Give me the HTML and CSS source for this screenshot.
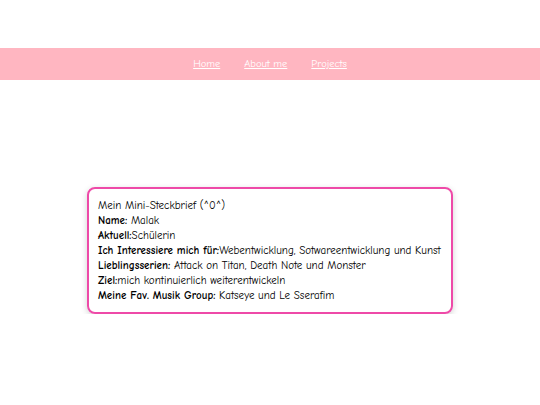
FILE: index.html
```html
<!DOCTYPE html>
<html lang="de">
<head>
<meta charset="utf-8">
<title>Mini-Steckbrief</title>
<link rel="stylesheet" href="styles.css">
</head>
<body>
<nav class="nav">
  <a href="#">Home</a>
  <a href="#">About me</a>
  <a href="#">Projects</a>
</nav>
<main class="main">
  <section class="card">
    <p>Mein Mini-Steckbrief (^0^)</p>
    <p><b>Name:</b> Malak</p>
    <p><b>Aktuell:</b>Schülerin</p>
    <p><b>Ich Interessiere mich für:</b>Webentwicklung, Sotwareentwicklung und Kunst</p>
    <p><b>Lieblingsserien:</b> Attack on Titan, Death Note und Monster</p>
    <p><b>Ziel:</b>mich kontinuierlich weiterentwickeln</p>
    <p><b>Meine Fav. Musik Group:</b> Katseye und Le Sserafim</p>
  </section>
</main>
</body>
</html>
```

FILE: styles.css
```css
html, body {
  margin: 0;
  padding: 0;
  background: #ffffff;
}
body {
  font-family: "Comic Sans MS", "Comic Neue", "Open Sans", "DejaVu Sans", sans-serif;
  font-size: 11px;
  color: #000000;
}
.nav {
  margin-top: 48px;
  height: 32px;
  background: #ffb6c1;
  display: flex;
  justify-content: center;
  align-items: center;
  gap: 24px;
}
.nav a {
  color: #ffffff;
  text-decoration: underline;
  font-size: 10.5px;
}
.main {
  display: flex;
  justify-content: center;
  padding-top: 107px;
}
.card {
  width: 344px;
  height: 103px;
  padding: 10px 9px;
  border: 2px solid #ee4aa8;
  border-radius: 8px;
  box-shadow: 0 2px 6px rgba(0,0,0,0.18);
  display: flex;
  flex-direction: column;
  justify-content: center;
}
.card p {
  margin: 0;
  line-height: 15px;
  white-space: nowrap;
}
.card b {
  font-weight: bold;
}
```
